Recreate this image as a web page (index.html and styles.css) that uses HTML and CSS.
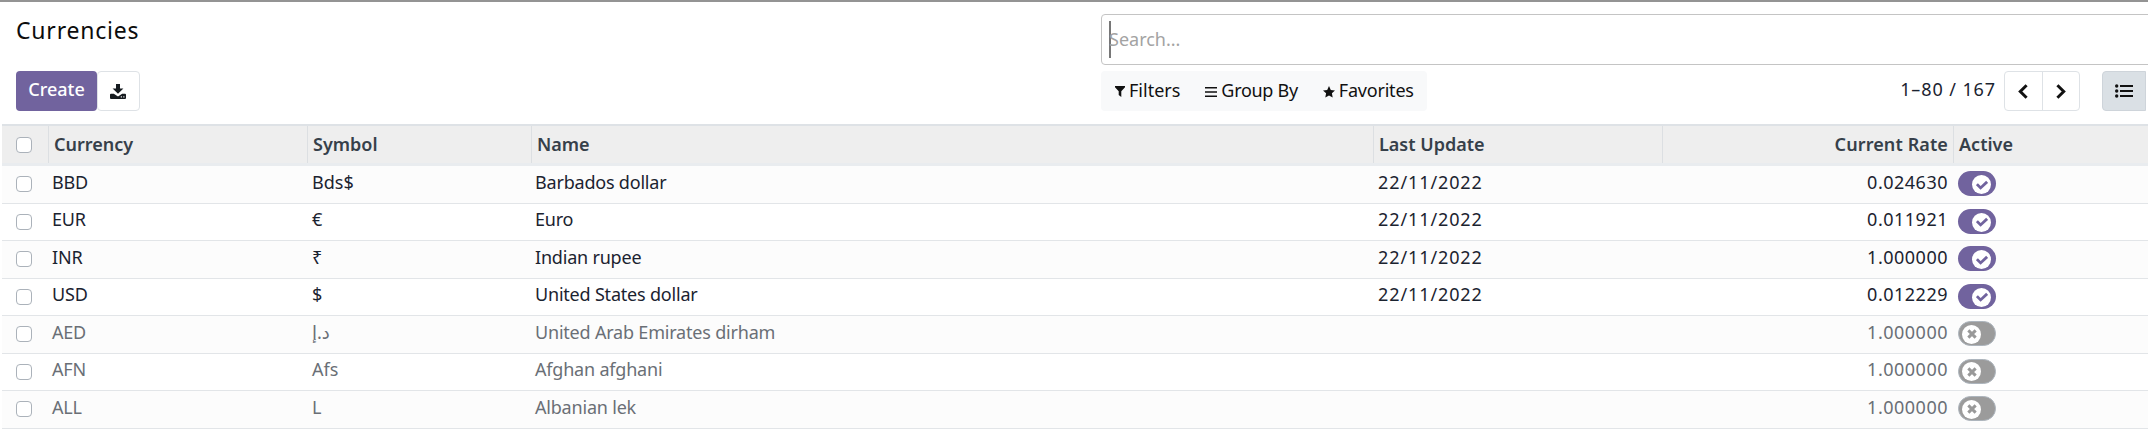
FILE: index.html
```html
<!DOCTYPE html>
<html lang="en">
<head>
<meta charset="utf-8">
<title>Currencies</title>
<link rel="stylesheet" href="styles.css">
</head>
<body>
<svg class="defs" width="0" height="0" aria-hidden="true">
  <symbol id="tick" viewBox="0 0 12 12"><path d="M0.900 5.200 4.600 8.900 11.100 2.800" fill="none" stroke="#71639e" stroke-width="2.8"/></symbol>
  <symbol id="cross" viewBox="0 0 12 12"><path d="M1.600 1.600 10.400 10.400M10.400 1.600 1.600 10.400" fill="none" stroke="#999" stroke-width="3.6"/></symbol>
</svg>
<div class="page">
  <header class="panel">
    <div class="left">
      <h1 class="title">Currencies</h1>
      <div class="buttons">
        <button class="btn primary">Create</button>
        <button class="btn export" aria-label="Export">
          <svg width="16" height="15" viewBox="0 0 16 15"><path fill="#161b20" d="M6 0h4v4.600h3.400L8 9.800 2.600 4.600H6z"/><path fill="#161b20" d="M1 9.700h2.800L8 12.400l4.200-2.700H15a1 1 0 0 1 1 1V14a1 1 0 0 1-1 1H1a1 1 0 0 1-1-1v-3.300a1 1 0 0 1 1-1z"/><path fill="#fff" d="M10.800 12.300h1.100v1.100h-1.100zM13.300 12.300h1.100v1.100h-1.100z"/></svg>
        </button>
      </div>
    </div>
    <div class="right">
      <div class="search"><span class="caret"></span><span class="placeholder">Search...</span></div>
      <div class="tools">
        <div class="filters">
          <span class="tool"><svg width="10" height="11" viewBox="0 0 10 11"><path fill="#111" d="M0 0h10v1.200L6.300 5.200V11L3.700 9V5.200L0 1.200z"/></svg><span class="filter-label">Filters</span></span>
          <span class="tool"><svg width="12" height="10" viewBox="0 0 12 10"><path fill="#111" d="M0 0h12v1.600H0zM0 4.200h12v1.600H0zM0 8.400h12V10H0z"/></svg><span class="group-label">Group By</span></span>
          <span class="tool"><svg width="12" height="12" viewBox="0 0 12 12"><path fill="#111" d="m6 0 1.800 3.900 4.200.5-3.100 2.900.8 4.300L6 9.500l-3.700 2.100.8-4.300L0 4.400l4.200-.5z"/></svg><span class="fav-label">Favorites</span></span>
        </div>
        <div class="pager">
          <span class="count">1–80 / 167</span>
          <div class="arrows">
            <button class="arrow" aria-label="Previous"><svg width="10" height="15" viewBox="0 0 10 15"><path d="M8.600 1.300 2.300 7.500l6.300 6.200" fill="none" stroke="#111" stroke-width="3"/></svg></button>
            <button class="arrow" aria-label="Next"><svg width="10" height="15" viewBox="0 0 10 15"><path d="M1.400 1.300 7.700 7.500l-6.300 6.200" fill="none" stroke="#111" stroke-width="3"/></svg></button>
          </div>
          <button class="view" aria-label="List"><svg width="18" height="14" viewBox="0 0 18 14"><g fill="#111"><circle cx="1.700" cy="2" r="1.700"/><circle cx="1.700" cy="7" r="1.700"/><circle cx="1.700" cy="12" r="1.700"/><path d="M5 1h13v2H5zM5 6h13v2H5zM5 11h13v2H5z"/></g></svg></button>
        </div>
      </div>
    </div>
  </header>
  <main class="list">
    <div class="row head"><span class="c pick"><i class="box"></i></span><span class="c w-cur">Currency</span><span class="c w-sym">Symbol</span><span class="c w-name">Name</span><span class="c w-upd">Last Update</span><span class="c num w-rate-gap"></span><span class="c num w-rate">Current Rate</span><span class="c w-act">Active</span></div>
    <div class="row"><span class="c pick"><i class="box"></i></span><span class="c code">BBD</span><span class="c bds">Bds$</span><span class="c name">Barbados dollar</span><span class="c date">22/11/2022</span><span class="c num">0.024630</span><span class="c"><i class="toggle"><b class="knob"><svg width="12" height="12"><use href="#tick"/></svg></b></i></span></div>
    <div class="row"><span class="c pick"><i class="box"></i></span><span class="c code">EUR</span><span class="c">€</span><span class="c name">Euro</span><span class="c date">22/11/2022</span><span class="c num">0.011921</span><span class="c"><i class="toggle"><b class="knob"><svg width="12" height="12"><use href="#tick"/></svg></b></i></span></div>
    <div class="row"><span class="c pick"><i class="box"></i></span><span class="c code">INR</span><span class="c rupee">₹</span><span class="c name">Indian rupee</span><span class="c date">22/11/2022</span><span class="c num">1.000000</span><span class="c"><i class="toggle"><b class="knob"><svg width="12" height="12"><use href="#tick"/></svg></b></i></span></div>
    <div class="row"><span class="c pick"><i class="box"></i></span><span class="c code">USD</span><span class="c">$</span><span class="c name">United States dollar</span><span class="c date">22/11/2022</span><span class="c num">0.012229</span><span class="c"><i class="toggle"><b class="knob"><svg width="12" height="12"><use href="#tick"/></svg></b></i></span></div>
    <div class="row muted"><span class="c pick"><i class="box"></i></span><span class="c code">AED</span><span class="c arabic">د.إ</span><span class="c name">United Arab Emirates dirham</span><span class="c date"></span><span class="c num">1.000000</span><span class="c"><i class="toggle off"><b class="knob"><svg width="10" height="10"><use href="#cross"/></svg></b></i></span></div>
    <div class="row muted"><span class="c pick"><i class="box"></i></span><span class="c code">AFN</span><span class="c">Afs</span><span class="c name">Afghan afghani</span><span class="c date"></span><span class="c num">1.000000</span><span class="c"><i class="toggle off"><b class="knob"><svg width="10" height="10"><use href="#cross"/></svg></b></i></span></div>
    <div class="row muted"><span class="c pick"><i class="box"></i></span><span class="c code">ALL</span><span class="c">L</span><span class="c name">Albanian lek</span><span class="c date"></span><span class="c num">1.000000</span><span class="c"><i class="toggle off"><b class="knob"><svg width="10" height="10"><use href="#cross"/></svg></b></i></span></div>
  </main>
</div>
</body>
</html>
```
FILE: styles.css
```css
* { box-sizing: border-box; }
body { margin: 0; background: #fff; overflow: hidden; font-family: "Noto Sans", "DejaVu Sans", sans-serif; font-size: 18px; color: #1b2330; }
svg { display: block; flex: none; }
.defs { position: absolute; }
button { font: inherit; padding: 0; margin: 0; }
.page { width: 2148px; height: 430px; overflow: hidden; border-top: 2px solid #949494; }
.panel { display: flex; height: 122px; padding-left: 16px; }
.left { flex: none; width: 1085px; padding-top: 10px; }
.title { margin: 0; height: 36px; line-height: 36px; font-size: 23px; font-weight: 400; color: #0c0c0c; letter-spacing: 0.8px; }
.buttons { display: flex; gap: 0; margin-top: 23px; }
.btn { height: 40px; border-radius: 4px; display: flex; align-items: center; justify-content: center; }
.primary { width: 81px; border: 0; background: #71639e; color: #fff; font-weight: 500; padding-bottom: 4px; }
.export { width: 43px; border: 1px solid #dee2e6; background: #fff; padding-right: 1px; }
.right { flex: none; width: 1047px; padding-top: 12px; }
.search { display: flex; align-items: center; height: 51px; width: 1100px; border: 1px solid #c4c4c4; border-radius: 4px; padding: 0 0 1px 7px; color: #a3a3a3; }
.caret { width: 2px; height: 37px; margin-right: -2px; background: #777; }
.tools { display: flex; justify-content: space-between; margin-top: 6px; }
.filters { display: flex; align-items: center; width: 326px; height: 40px; padding: 0 0 3px 14px; gap: 25px; background: #f8f9fa; border-radius: 4px; color: #111; }
.tool { display: flex; align-items: center; gap: 4px; }
.tool svg { margin-top: 4px; }
.group-label { letter-spacing: -0.3px; }
.fav-label { letter-spacing: -0.2px; }
.pager { display: flex; align-items: center; margin-right: 2px; }
.count { letter-spacing: 0.9px; margin-right: 8px; padding-bottom: 5px; }
.arrows { display: flex; width: 76px; height: 40px; border: 1px solid #dee2e6; border-radius: 4px; margin-right: 22px; }
.arrow { flex: 1; display: flex; align-items: center; justify-content: center; border: 0; background: none; }
.arrow + .arrow { border-left: 1px solid #dee2e6; }
.view { width: 44px; height: 40px; display: flex; align-items: center; justify-content: center; border: 1px solid #ced4da; border-radius: 4px 0 0 4px; background: #dae0e5; }
.list { margin-left: 2px; }
.row { display: grid; grid-template-columns: 46px 259px 224px 842px 289px 291px 1fr; height: 37.5px; border-bottom: 1px solid #e2e5e8; background: #fff; }
.row:nth-child(even) { background: #fcfcfc; }
.c { display: flex; align-items: center; padding: 0 6px 5px 5px; white-space: nowrap; }
.row .pick { padding: 0 0 0 14px; }
.row .num { grid-column: 6; justify-content: flex-end; letter-spacing: 0.5px; padding-right: 5px; }
.name { letter-spacing: -0.2px; padding-left: 4px; }
.code { padding-left: 4px; letter-spacing: -0.2px; }
.date { letter-spacing: 0.9px; }
.box { width: 16px; height: 16px; border: 1px solid #abb2ba; border-radius: 4px; background: #fff; }
.head { height: 42px; background: #eee; border-top: 2px solid #dee2e6; border-bottom: 3px solid #e9ecef; font-weight: 600; color: #36404a; }
.head .c { border-left: 1px solid #dcdfe2; padding-bottom: 2px; }
.head .pick { border-left: 0; padding-bottom: 0; }
.head .w-rate-gap { grid-column: auto; display: none; }
.head .w-rate { letter-spacing: 0.1px; }
.muted { color: #6a6f76; }
.toggle { display: flex; align-items: center; justify-content: flex-end; width: 38px; height: 25px; padding: 2px 5px 0 4px; border-radius: 13px; background: #71639e; margin-top: 4px; }
.toggle.off { justify-content: flex-start; background: #9b9b9b; border: 1px solid #adb5bd; padding: 1px 3px 0 3px; }
.knob { display: flex; align-items: center; justify-content: center; width: 19px; height: 19px; border-radius: 50%; background: #fff; }
```
